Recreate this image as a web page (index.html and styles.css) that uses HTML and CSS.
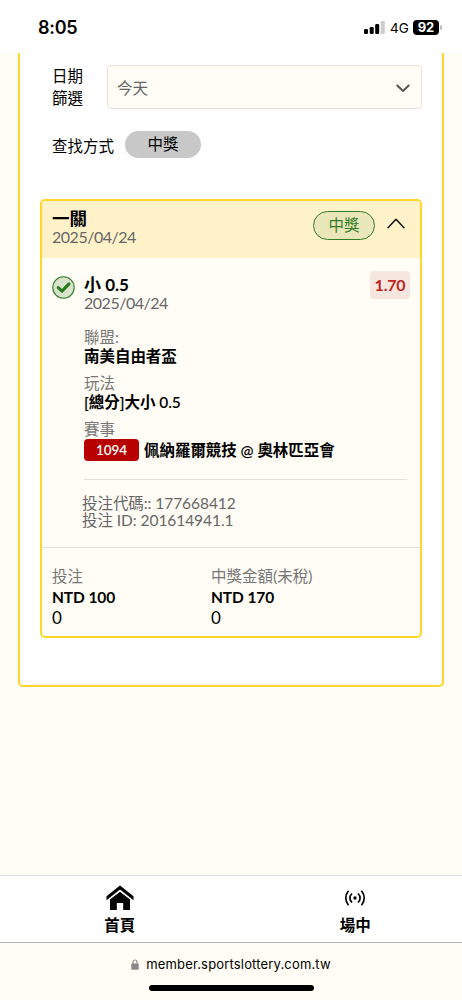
FILE: index.html
```html
<!DOCTYPE html>
<html lang="zh-Hant">
<head>
<meta charset="utf-8">
<title>投注紀錄</title>
<link rel="stylesheet" href="styles.css">
</head>
<body>
<div class="screen">
  <header class="status">
    <span class="clock">8:05</span>
    <div class="status-right">
      <svg class="signal" width="21" height="13" viewBox="0 0 21 13"><rect x="0" y="8" width="4" height="5" rx="1.2"/><rect x="5.7" y="6" width="4" height="7" rx="1.2"/><rect x="11.2" y="3" width="4" height="10" rx="1.2"/><rect x="16.8" y="0" width="4" height="13" rx="1.2" fill="#ccc"/></svg>
      <span class="network">4G</span>
      <span class="battery">92</span>
      <span class="battery-cap"></span>
    </div>
  </header>

  <main class="content">
    <section class="panel">
      <div class="filter">
        <div class="filter-label"><span>日期</span><span>篩選</span></div>
        <div class="select"><span>今天</span>
          <svg width="14" height="9" viewBox="0 0 14 9" fill="none" stroke="#555" stroke-width="2" stroke-linecap="round" stroke-linejoin="round"><path d="M1.3 1.500 7 7 12.700 1.500"/></svg>
        </div>
      </div>
      <div class="mode"><span>查找方式</span><span class="mode-pill">中獎</span></div>

      <article class="card">
        <div class="card-head">
          <div class="card-title">
            <strong>一關</strong>
            <span class="date">2025/04/24</span>
          </div>
          <span class="win-pill">中獎</span>
          <svg class="collapse" width="18" height="11" viewBox="0 0 18 11" fill="none" stroke="#111" stroke-width="1.500" stroke-linecap="round" stroke-linejoin="round"><path d="M1 9.700 9 1.300 17 9.700"/></svg>
        </div>
        <div class="bet">
          <svg class="check" width="23" height="23" viewBox="0 0 23 23"><circle cx="11.500" cy="11.500" r="10.700" fill="#d7e3ca" stroke="#327b28" stroke-width="1.100"/><path d="m6.200 11.600 3.800 3.500 7-7.200" fill="none" stroke="#287a1c" stroke-width="3" stroke-linejoin="round" stroke-linecap="round"/></svg>
          <div class="bet-info">
            <div class="pick-row">
              <div class="pick"><strong>小 0.5</strong><span class="date">2025/04/24</span></div>
              <span class="odds">1.70</span>
            </div>
            <dl class="details">
              <dt>聯盟:</dt><dd>南美自由者盃</dd>
              <dt>玩法</dt><dd>[總分]大小 0.5</dd>
              <dt>賽事</dt><dd class="match"><span class="code">1094</span><span>佩納羅爾競技 @ 奧林匹亞會</span></dd>
            </dl>
            <div class="ids"><span class="id-code">投注代碼:: 177668412</span><span class="id-bet">投注 ID: 201614941.1</span></div>
          </div>
        </div>
        <div class="totals">
          <div class="total"><span class="total-label">投注</span><strong>NTD 100</strong><span class="zero">0</span></div>
          <div class="total"><span class="total-label">中獎金額(未稅)</span><strong>NTD 170</strong><span class="zero">0</span></div>
        </div>
      </article>
    </section>
  </main>

  <nav class="tabs">
    <a class="tab">
      <svg width="28" height="26" viewBox="0 0 28 26"><path d="M0.500 11.200 14 0.500 27.500 11.200V15.200L14 4.600 0.500 15.200Z"/><path d="M4 14.500 14 6.800 24 14.500V25H17.200V18H10.800V25H4Z"/></svg>
      <span>首頁</span>
    </a>
    <a class="tab">
      <svg width="28" height="26" viewBox="0 0 28 26" fill="none" stroke="#000" stroke-width="1.700" stroke-linecap="round"><circle cx="14" cy="13" r="1.700" fill="#000" stroke="none"/><path d="M10.600 9a5.600 5.600 0 0 0 0 8M17.400 9a5.600 5.600 0 0 1 0 8M7.200 6.300a10.500 10.500 0 0 0 0 13.400M20.800 6.300a10.500 10.500 0 0 1 0 13.400"/></svg>
      <span>場中</span>
    </a>
  </nav>
  <footer class="browser">
    <div class="address">
      <svg width="8" height="11" viewBox="0 0 8 11"><path d="M2 5V3a2 2 0 0 1 4 0v2" fill="none" stroke="#888" stroke-width="1.100"/><rect x="0.300" y="4.500" width="7.400" height="6.300" rx="1.100" fill="#888"/></svg>
      <span>member.sportslottery.com.tw</span>
    </div>
    <div class="home-bar"></div>
  </footer>
</div>
</body>
</html>
```
FILE: styles.css
```css
* { box-sizing: border-box; }
body {
  margin: 0;
  background: #fffdf5;
  color: #000;
  font-family: Lato, "Noto Sans CJK TC", sans-serif;
  font-size: 15.5px;
}
svg { display: block; flex: none; }
span, strong, dt, dd { white-space: nowrap; }
.screen { width: 462px; height: 1000px; display: flex; flex-direction: column; overflow: hidden; }

.status {
  height: 53px;
  flex: none;
  padding: 2px 20px 0 38px;
  background: #fff;
  display: flex;
  align-items: center;
  justify-content: space-between;
  font-family: Inter, sans-serif;
}
.clock { font-size: 18px; font-weight: 600; letter-spacing: -0.3px; }
.status-right { display: flex; align-items: center; }
.network { font-size: 13.5px; font-weight: 400; margin-left: 5px; width: 23px; }
.battery {
  width: 26px;
  height: 15px;
  border-radius: 4px;
  background: #000;
  color: #fff;
  font-size: 13px;
  font-weight: 700;
  line-height: 15px;
  text-align: center;
}
.battery-cap { width: 2px; height: 5px; margin-left: 1px; border-radius: 0 2px 2px 0; background: #bbb; }

.content { flex: 1; padding: 0 18px; }
.panel {
  height: 634px;
  padding: 12px 20px 0;
  background: #fff;
  border: 2px solid #ffd72b;
  border-top: 0;
  border-radius: 0 0 5px 5px;
}
.filter { display: flex; gap: 24px; padding-left: 12px; }
.filter-label { width: 31px; display: flex; flex-direction: column; line-height: 22px; }
.select {
  flex: 1;
  height: 44px;
  padding: 0 11px 1px 9px;
  display: flex;
  align-items: center;
  justify-content: space-between;
  background: #fffdf5;
  border: 1px solid #e6e2db;
  border-radius: 4px;
  color: #666;
}
.select svg { margin-top: 3px; }
.mode { display: flex; align-items: center; gap: 11px; padding-left: 12px; margin-top: 22px; height: 27px; }
.mode-pill { width: 76px; height: 27px; border-radius: 14px; background: #c8c8c8; line-height: 27px; text-align: center; }

.card {
  height: 439px;
  margin-top: 41px;
  background: #fffdf5;
  border: 2px solid #ffd72b;
  border-radius: 5px;
  display: flex;
  flex-direction: column;
}
.card-head { height: 57px; padding: 9px 16px 0 10px; background: #fff2c9; border-radius: 3px 3px 0 0; display: flex; }
.card-title { flex: 1; display: flex; flex-direction: column; }
.card-title strong { font-size: 17.5px; line-height: 18px; }
.date { color: #666; font-size: 16px; line-height: 18px; letter-spacing: -0.48px; }
.win-pill {
  width: 62px;
  height: 29px;
  margin-top: 1px;
  border: 1px solid #327b28;
  border-radius: 15px;
  background: #e9e7b9;
  color: #327b28;
  line-height: 27px;
  text-align: center;
}
.collapse { margin: 8px 0 0 12px; }
.win-pill + .collapse { margin-right: -1px; }
.bet { height: 289px; padding: 18px 10px 0; display: flex; gap: 9px; }
.bet-info { flex: 1; }
.pick-row { display: flex; justify-content: space-between; margin-top: -1px; }
.pick { display: flex; flex-direction: column; }
.pick strong { font-size: 17px; line-height: 19px; }
.odds {
  width: 40px;
  height: 28px;
  margin-top: -4px;
  border-radius: 4px;
  background: #f7e6df;
  color: #bd261c;
  font-size: 16px;
  font-weight: 700;
  line-height: 28px;
  letter-spacing: -0.2px;
  text-align: center;
}
.details { margin: 16px 3px 0 0; height: 152px; border-bottom: 1px solid #e2dfd8; }
.details dt { color: #777; line-height: 19px; height: 19px; }
.details dd { margin: 0 0 8px; line-height: 19px; height: 19px; font-weight: 600; letter-spacing: -0.04px; }
.details .match { height: 22px; display: flex; align-items: center; gap: 5px; }
.code { width: 55px; height: 22px; border-radius: 4px; background: #b80000; color: #fff; font-size: 13.5px; line-height: 22px; text-align: center; }
.ids { display: flex; flex-direction: column; margin: 15px 0 0 -2px; color: #666; line-height: 17px; letter-spacing: -0.06px; }
.totals { flex: 1; padding: 18px 10px 0; border-top: 1px solid #e2dfd8; display: grid; grid-template-columns: 159px 1fr; }
.total { display: flex; flex-direction: column; line-height: 21px; }
.total-label { color: #777; }
.total strong { letter-spacing: -0.1px; }
.zero { font-size: 17px; line-height: 20px; }

.tabs { height: 67px; flex: none; background: #fff; border-top: 1px solid #dedede; display: flex; }
.tab { flex: 1; display: flex; flex-direction: column; align-items: center; padding-top: 9px; font-weight: 600; line-height: 24px; gap: 2px; }
.tab:first-child { padding-left: 13px; }
.tab:last-child { padding-left: 22px; }
.browser { height: 58px; flex: none; border-top: 1px solid #b8b8b8; display: flex; flex-direction: column; align-items: center; }
.address { height: 42px; display: flex; align-items: center; gap: 7px; font-family: Inter, sans-serif; font-size: 13px; letter-spacing: 0.17px; }
.home-bar { width: 165px; height: 6px; border-radius: 3px; background: #000; }
```
